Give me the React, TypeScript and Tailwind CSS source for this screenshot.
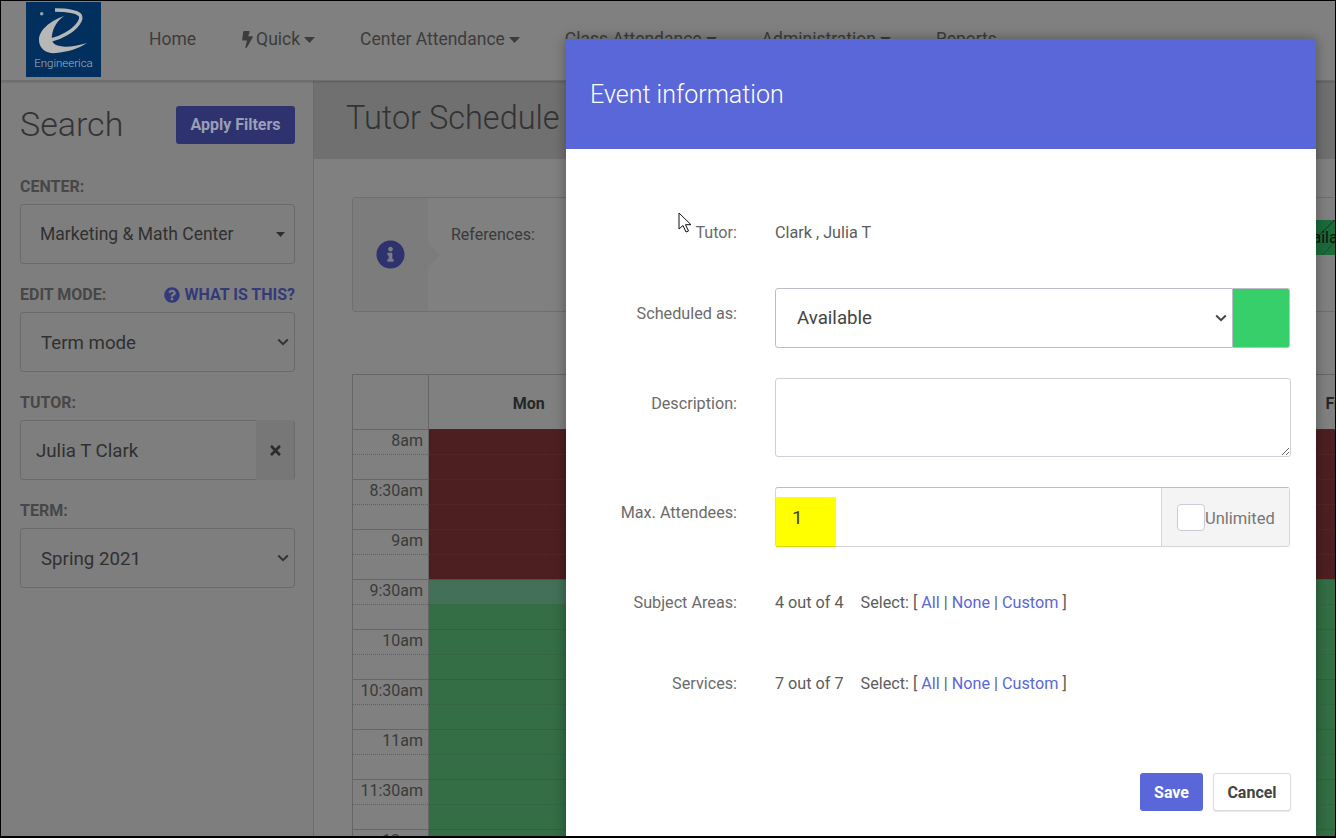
import { FaBolt, FaInfoCircle, FaQuestionCircle, FaTimes } from "react-icons/fa";

const font = { fontFamily: "Roboto, sans-serif" };

function Caret({ className = "" }: { className?: string }) {
  return (
    <svg width="11" height="6" viewBox="0 0 11 6" className={className}>
      <path d="M0 0h11L5.5 6z" fill="currentColor" />
    </svg>
  );
}

function Chevron({ color = "#333" }: { color?: string }) {
  return (
    <svg width="12" height="8" viewBox="0 0 12 8" fill="none">
      <path d="M1.2 1.5 6 6.2l4.8-4.7" stroke={color} strokeWidth="2" />
    </svg>
  );
}

function Logo() {
  return (
    <div className="w-[75px] h-[75px] bg-[#01305f] mt-px flex flex-col items-center shrink-0">
      <svg width="75" height="56" viewBox="0 0 75 56" className="shrink-0">
        <circle cx="15.7" cy="11.7" r="1.8" fill="#8fa3b8" />
        <path
          d="M38 14C24 19 13 28 13 38c0 9 8 14 17 13 11-1 22-4 31-10-11 3-21 5-27 3-7-1-9-5-8-11 1-7 5-14 12-19z"
          fill="#b7b7b7"
        />
        <path d="M29 8c9 0 21 1 25 5 3 4-3 13-14 19-5 3-10 5-15 6" fill="none" stroke="#b7b7b7" strokeWidth="3.4" />
      </svg>
      <span className="text-[11.5px] leading-[13px] text-[#a3b0bf] font-light -mt-[1px]">Engineerica</span>
    </div>
  );
}

function SideLabel({ children }: { children: string }) {
  return <span className="block text-[16px] leading-[22px] font-bold uppercase text-[#474747]">{children}</span>;
}

function SideField({ children, className = "" }: { children: React.ReactNode; className?: string }) {
  return (
    <div className={`h-[60px] mt-[6px] border border-[#6a6a6a] rounded-[3px] flex items-center justify-between text-[#303030] ${className}`}>
      {children}
    </div>
  );
}

function Sidebar() {
  return (
    <aside className="w-[312px] shrink-0 ml-[1px] bg-[#7e7e7e] border-r border-[#6c6c6c] px-[18px] pt-[25px] h-[800px]">
      <div className="flex items-center justify-between h-[38px]">
        <h2 className="text-[34px] font-light text-[#333] -mt-[2px]">Search</h2>
        <button className="w-[119px] h-[38px] bg-[#2e3370] rounded-[3px] text-[16px] font-bold text-[#9b9eb5]">Apply Filters</button>
      </div>
      <div className="mt-[32px]"><SideLabel>Center:</SideLabel></div>
      <SideField className="pl-[19px] pr-[9px] text-[17.5px]">
        <span>Marketing &amp; Math Center</span>
        <Caret className="text-[#2e2e2e] w-[9px] h-[5px]" />
      </SideField>
      <div className="mt-[20px] flex items-center justify-between">
        <SideLabel>Edit mode:</SideLabel>
        <span className="flex items-center gap-[5px] text-[16px] leading-[22px] font-bold text-[#34397a] uppercase">
          <FaQuestionCircle size={16} /> What is this?
        </span>
      </div>
      <SideField className="pl-[20px] pr-[5px] text-[18.7px]">
        <span className="pt-[2px]">Term mode</span>
        <Chevron />
      </SideField>
      <div className="mt-[20px]"><SideLabel>Tutor:</SideLabel></div>
      <SideField className="pl-[15px] text-[18.7px]">
        <span className="pt-[2px]">Julia T Clark</span>
        <span className="w-[38px] h-[60px] bg-[#777] flex items-center justify-center text-[#2c2c2c]"><FaTimes size={15} /></span>
      </SideField>
      <div className="mt-[20px]"><SideLabel>Term:</SideLabel></div>
      <SideField className="pl-[20px] pr-[5px] text-[18.7px]">
        <span className="pt-[2px]">Spring 2021</span>
        <Chevron />
      </SideField>
    </aside>
  );
}

const TIMES = ["8am", "8:30am", "9am", "9:30am", "10am", "10:30am", "11am", "11:30am", "12pm"];

function Slot({ color, line, dotted }: { color: string; line: string; dotted: string }) {
  return (
    <div className={`w-[201.5px] shrink-0 h-[50px] border-t ${color} ${line}`}>
      <div className={`h-[25px] border-b border-dotted ${dotted}`} />
    </div>
  );
}

function Calendar() {
  return (
    <div className="mt-[62px] w-[1100px] border-l border-t border-[#666]">
      <div className="flex h-[54px]">
        <div className="w-[76px] border-r border-[#666]" />
        {["Mon", "", "", "", "Fri"].map((d, i) => (
          <div key={i} className="w-[201.5px] shrink-0 flex items-center justify-center text-[16px] font-bold text-[#262626] pt-[4px] pr-[2px]">{d}</div>
        ))}
      </div>
      {TIMES.map((t, i) => {
        const red = i < 3;
        const color = red ? "bg-[#4e1f20]" : "bg-[#336e44]";
        const line = red ? "border-[#5a2021]" : "border-[#2f6340]";
        const dotted = red ? "border-[#5a2a2b]" : "border-[#2f6340]";
        return (
          <div key={t} className="flex">
            <div className="w-[76px] h-[50px] border-r border-t border-[#666] text-right">
              <div className="h-[25px] border-b border-dotted border-[#5f5f5f] pr-[5px] text-[16px] leading-[22px] text-[#3a3a3a]">{t}</div>
            </div>
            <div className={`w-[201.5px] shrink-0 h-[50px] border-t ${color} ${line}`}>
              <div className={`h-[25px] border-b border-dotted ${dotted} ${t === "9:30am" ? "bg-[#437158]" : ""}`} />
            </div>
            <Slot color="bg-[#7e7e7e]" line="border-[#6c6c6c]" dotted="border-[#6c6c6c]" />
            <Slot color="bg-[#7e7e7e]" line="border-[#6c6c6c]" dotted="border-[#6c6c6c]" />
            <Slot color="bg-[#7e7e7e]" line="border-[#6c6c6c]" dotted="border-[#6c6c6c]" />
            <Slot color={color} line={line} dotted={dotted} />
          </div>
        );
      })}
    </div>
  );
}

function Main() {
  return (
    <main className="flex-1 min-w-0 bg-[#808080]">
      <div className="h-[78px] bg-[#707070] pl-[32px] flex items-center">
        <h1 className="text-[32.5px] font-light text-[#333] -mt-[4px]">Tutor Schedule</h1>
      </div>
      <div className="pl-[38px] pt-[38px]">
        <div className="w-[1100px] h-[115px] border border-[#6f6f6f] rounded-[3px] flex">
          <div className="w-[75px] h-full bg-[#7c7c7c] flex items-center justify-center relative text-[#2e3370]">
            <FaInfoCircle size={29} />
            <span className="absolute left-full top-1/2 -translate-y-1/2 border-y-[12px] border-l-[12px] border-y-transparent border-l-[#7c7c7c]" />
          </div>
          <span className="ml-[23px] mt-[26px] text-[16px] leading-[22px] text-[#3a3a3a]">References:</span>
          <div className="ml-[755px] mt-[22px] w-[120px] h-[35px] shrink-0 bg-[#1c6b3a] bg-[repeating-linear-gradient(135deg,transparent_0,transparent_15px,#164f2b_15px,#164f2b_16px)] text-[16px] leading-[35px] text-[#111] pl-[5px] overflow-hidden">Available</div>
        </div>
        <Calendar />
      </div>
    </main>
  );
}

function ModalRow({ label, children, className = "" }: { label: string; children: React.ReactNode; className?: string }) {
  return (
    <div className={`flex items-start ${className}`}>
      <div className="w-[171px] pt-[16px] text-right text-[16.2px] leading-[20px] text-[#6b6b6b]">{label}</div>
      <div className="ml-[38px] flex-1 min-w-0">{children}</div>
    </div>
  );
}

function Pick({ count }: { count: string }) {
  return (
    <div className="pt-[16px] text-[16.2px] leading-[20px] text-[#5c5c5c]">
      {count}
      <span className="ml-[17px]">Select: [ </span>
      <span className="text-[#5a67d8]">All</span> | <span className="text-[#5a67d8]">None</span> | <span className="text-[#5a67d8]">Custom</span> ]
    </div>
  );
}

function Modal() {
  return (
    <div className="absolute left-[565px] top-[38px] w-[750px] h-[799px] bg-white shadow-[0_0_12px_rgba(0,0,0,0.35)]">
      <div className="h-[110px] bg-[#5a67d8] pl-[24px] pt-[2px] flex items-center text-white text-[25px] font-light">Event information</div>
      <div className="pt-[58px] pr-[25px]">
        <ModalRow label="Tutor:" className="h-[55px]">
          <div className="pt-[16px] text-[16.2px] leading-[20px] text-[#5c5c5c]">Clark , Julia T</div>
        </ModalRow>
        <ModalRow label="Scheduled as:" className="mt-[26px]">
          <div className="flex h-[60px] w-[515px]">
            <div className="flex-1 border border-[#bdbdc7] rounded-l-[3px] pl-[21px] pr-[5px] flex items-center justify-between text-[18.7px] text-[#444]">
              <span>Available</span>
              <Chevron color="#444" />
            </div>
            <div className="w-[57px] bg-[#36cf6a] border border-[#bdbdc7] border-l-0 rounded-r-[3px]" />
          </div>
        </ModalRow>
        <ModalRow label="Description:" className="mt-[30px]">
          <textarea className="block w-[516px] h-[79px] border border-[#d0d0d8] rounded-[3px]" />
        </ModalRow>
        <ModalRow label="Max. Attendees:" className="mt-[30px]">
          <div className="flex h-[60px] w-[515px] border border-[#d4d4da] border-t-[#bdbdc7] rounded-[3px]">
            <div className="flex-1 flex items-end">
              <div className="w-[60px] h-[50px] -mb-px bg-[#ffff00] border-b border-[#d9d900] pl-[16px] text-[19px] leading-[41px] text-[#444]">1</div>
            </div>
            <div className="w-[128px] bg-[#f4f4f4] border-l border-[#d4d4da] pl-[15px] flex items-center text-[16.5px] text-[#777]">
              <span className="block w-[28px] h-[27px] bg-white border border-[#ccccd6] rounded-[4px]" />
              <span className="pt-[4px]">Unlimited</span>
            </div>
          </div>
        </ModalRow>
        <ModalRow label="Subject Areas:" className="mt-[30px] h-[50px]"><Pick count="4 out of 4" /></ModalRow>
        <ModalRow label="Services:" className="mt-[31px] h-[50px]"><Pick count="7 out of 7" /></ModalRow>
        <div className="mt-[65px] flex justify-end gap-[10px]">
          <button className="w-[63px] h-[38px] bg-[#5a67d8] rounded-[3px] text-white text-[16px] font-bold pt-[2px]">Save</button>
          <button className="w-[78px] h-[38px] bg-white border border-[#dcdcdc] rounded-[3px] text-[#444] text-[16px] font-bold pt-[2px] shadow-[0_1px_1px_rgba(0,0,0,0.1)]">Cancel</button>
        </div>
      </div>
      <svg width="16" height="22" viewBox="0 0 16 22" className="absolute left-[112px] top-[173px]">
        <path d="M1 1v16l4-3.5 3 6.5 2.5-1-3-6.3H13z" fill="#fff" stroke="#111" strokeWidth="1" />
      </svg>
    </div>
  );
}

function NavItem({ children }: { children: React.ReactNode }) {
  return <span className="flex items-center gap-[4px] text-[17.5px] text-[#3c3c3c]">{children}</span>;
}

export default function App() {
  return (
    <div className="relative w-[1336px] h-[838px] overflow-hidden bg-[#808080] border-t border-r border-b-2 border-l border-black" style={font}>
      <header className="h-[80px] pl-[25px] flex border-b border-[#6e6e6e] shadow-[0_1px_2px_rgba(0,0,0,0.2)] relative">
        <Logo />
        <nav className="ml-[48px] h-[77px] flex items-center gap-[45px]">
          <NavItem>Home</NavItem>
          <NavItem><FaBolt size={17} className="-ml-[2px] -mr-[4px]" />Quick<Caret /></NavItem>
          <NavItem>Center Attendance<Caret /></NavItem>
          <NavItem>Class Attendance<Caret /></NavItem>
          <NavItem>Administration<Caret /></NavItem>
          <NavItem>Reports</NavItem>
        </nav>
      </header>
      <div className="flex">
        <Sidebar />
        <Main />
      </div>
      <Modal />
    </div>
  );
}
